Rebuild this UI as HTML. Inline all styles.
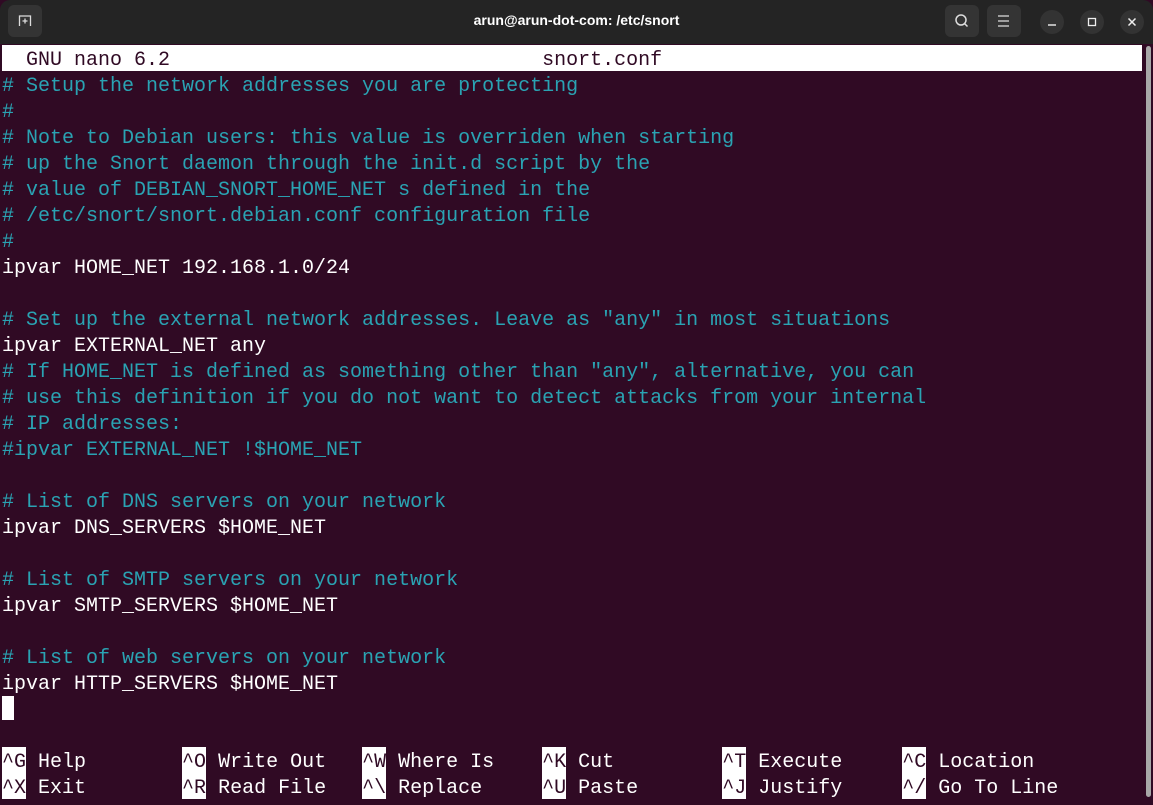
<!DOCTYPE html>
<html><head><meta charset="utf-8"><style>
*{margin:0;padding:0;box-sizing:border-box}
body{width:1153px;height:802px;background:#300a24;overflow:hidden;position:relative;font-family:"Liberation Mono",monospace}
#tb{position:absolute;left:0;top:0;width:1153px;height:44px;background:#242424;border-radius:10px 10px 0 0}
#title{position:absolute;left:0;width:1153px;top:12px;text-align:center;color:#fff;font:bold 14px "Liberation Sans",sans-serif}
.btn{position:absolute;top:5px;width:34px;height:32px;background:#343434;border-radius:6px}
.cb{position:absolute;top:10px;width:24px;height:24px;background:#333;border-radius:50%}
#hdr{position:absolute;left:2px;top:45px;width:1140px;height:26px;background:#fff}
.l{position:absolute;left:2px;height:26px;line-height:32px;font-size:20px;white-space:pre;color:#fff}
.c{color:#2aa3b3}
.k{display:inline-block;height:26px;line-height:32px;vertical-align:top;background:#fff;color:#300a24}
#sb{position:absolute;left:1146px;top:46px;width:5px;height:751px;background:#a8a8a8;border-radius:3px}
</style></head><body>
<div id="tb">
<div class="btn" style="left:8px"><svg width="34" height="32" viewBox="0 0 34 32"><path d="M11.5 21V11h11v10M17 13.5v5M14.5 16h5" stroke="#ddd" stroke-width="1.3" fill="none"/></svg></div>
<div id="title">arun@arun-dot-com: /etc/snort</div>
<div class="btn" style="left:945px"><svg width="34" height="32" viewBox="0 0 34 32"><circle cx="16" cy="15" r="5" stroke="#ddd" stroke-width="1.5" fill="none"/><path d="M19.5 18.5l3 3" stroke="#ddd" stroke-width="1.5"/></svg></div>
<div class="btn" style="left:987px"><svg width="34" height="32" viewBox="0 0 34 32"><path d="M11 11h11M11 16h11M11 21h11" stroke="#ddd" stroke-width="1.3"/></svg></div>
<div class="cb" style="left:1040px"><svg width="24" height="24"><path d="M8 15h8" stroke="#eee" stroke-width="1.4"/></svg></div>
<div class="cb" style="left:1080px"><svg width="24" height="24"><rect x="8.5" y="8.5" width="7" height="7" stroke="#eee" stroke-width="1.3" fill="none"/></svg></div>
<div class="cb" style="left:1120px"><svg width="24" height="24"><path d="M8.5 8.5l7 7M15.5 8.5l-7 7" stroke="#eee" stroke-width="1.5"/></svg></div>
</div>
<div id="hdr"></div>
<div class="l" style="top:45px;color:#300a24">  GNU nano 6.2                               snort.conf</div>
<div class="l c" style="top:71px"># Setup the network addresses you are protecting</div>
<div class="l c" style="top:97px">#</div>
<div class="l c" style="top:123px"># Note to Debian users: this value is overriden when starting</div>
<div class="l c" style="top:149px"># up the Snort daemon through the init.d script by the</div>
<div class="l c" style="top:175px"># value of DEBIAN_SNORT_HOME_NET s defined in the</div>
<div class="l c" style="top:201px"># /etc/snort/snort.debian.conf configuration file</div>
<div class="l c" style="top:227px">#</div>
<div class="l" style="top:253px">ipvar HOME_NET 192.168.1.0/24</div>
<div class="l c" style="top:305px"># Set up the external network addresses. Leave as "any" in most situations</div>
<div class="l" style="top:331px">ipvar EXTERNAL_NET any</div>
<div class="l c" style="top:357px"># If HOME_NET is defined as something other than "any", alternative, you can</div>
<div class="l c" style="top:383px"># use this definition if you do not want to detect attacks from your internal</div>
<div class="l c" style="top:409px"># IP addresses:</div>
<div class="l c" style="top:435px">#ipvar EXTERNAL_NET !$HOME_NET</div>
<div class="l c" style="top:487px"># List of DNS servers on your network</div>
<div class="l" style="top:513px">ipvar DNS_SERVERS $HOME_NET</div>
<div class="l c" style="top:565px"># List of SMTP servers on your network</div>
<div class="l" style="top:591px">ipvar SMTP_SERVERS $HOME_NET</div>
<div class="l c" style="top:643px"># List of web servers on your network</div>
<div class="l" style="top:669px">ipvar HTTP_SERVERS $HOME_NET</div>
<div style="position:absolute;left:2px;top:696px;width:12px;height:24px;background:#fff"></div>
<div class="l" style="top:747px"><span class="k">^G</span> Help        <span class="k">^O</span> Write Out   <span class="k">^W</span> Where Is    <span class="k">^K</span> Cut         <span class="k">^T</span> Execute     <span class="k">^C</span> Location</div>
<div class="l" style="top:773px"><span class="k">^X</span> Exit        <span class="k">^R</span> Read File   <span class="k">^\</span> Replace     <span class="k">^U</span> Paste       <span class="k">^J</span> Justify     <span class="k">^/</span> Go To Line</div>
<div id="sb"></div>
</body></html>
